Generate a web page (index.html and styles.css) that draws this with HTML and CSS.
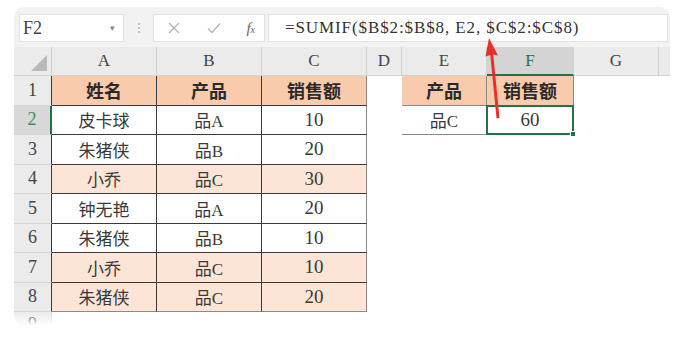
FILE: index.html
```html
<!DOCTYPE html>
<html lang="zh-CN">
<head>
<meta charset="utf-8">
<title>SUMIF</title>
<link rel="stylesheet" href="styles.css">
</head>
<body>
<div class="card">
  <div class="fbar">
    <div class="namebox"><span class="ref">F2</span><span class="caret">▾</span></div>
    <div class="dots"><i></i><i></i><i></i></div>
    <div class="btns">
      <svg class="ic" width="14" height="14" viewBox="0 0 14 14"><path d="M2 2L12 12M12 2L2 12" stroke="#b5b5b5" stroke-width="1.3" fill="none"/></svg>
      <svg class="ic" width="16" height="14" viewBox="0 0 16 14"><path d="M2 7.5L6 11.5L14 2.5" stroke="#b5b5b5" stroke-width="1.3" fill="none"/></svg>
      <span class="fx">f<small>x</small></span>
    </div>
    <div class="formula">=SUMIF($B$2:$B$8, E2, $C$2:$C$8)</div>
  </div>
  <div class="grid">
    <div class="ch corner"><span class="tri"></span></div>
    <div class="ch">A</div><div class="ch">B</div><div class="ch">C</div><div class="ch">D</div><div class="ch">E</div><div class="ch sel">F</div><div class="ch">G</div><div class="ch last"></div>

    <div class="rh">1</div>
    <div class="c hd">姓名</div><div class="c hd">产品</div><div class="c hd rb">销售额</div><div class="c e"></div>
    <div class="c hd eb">产品</div><div class="c hd eb">销售额</div><div class="c e"></div><div class="c e"></div>

    <div class="rh sel">2</div>
    <div class="c">皮卡球</div><div class="c">品A</div><div class="c rb num">10</div><div class="c e"></div>
    <div class="c eb">品C</div><div class="c eb active num">60<span class="handle"></span></div><div class="c e"></div><div class="c e"></div>

    <div class="rh">3</div>
    <div class="c">朱猪侠</div><div class="c">品B</div><div class="c rb num">20</div><div class="c e"></div><div class="c e"></div><div class="c e"></div><div class="c e"></div><div class="c e"></div>

    <div class="rh">4</div>
    <div class="c lt">小乔</div><div class="c lt">品C</div><div class="c lt rb num">30</div><div class="c e"></div><div class="c e"></div><div class="c e"></div><div class="c e"></div><div class="c e"></div>

    <div class="rh">5</div>
    <div class="c">钟无艳</div><div class="c">品A</div><div class="c rb num">20</div><div class="c e"></div><div class="c e"></div><div class="c e"></div><div class="c e"></div><div class="c e"></div>

    <div class="rh">6</div>
    <div class="c">朱猪侠</div><div class="c">品B</div><div class="c rb num">10</div><div class="c e"></div><div class="c e"></div><div class="c e"></div><div class="c e"></div><div class="c e"></div>

    <div class="rh">7</div>
    <div class="c lt">小乔</div><div class="c lt">品C</div><div class="c lt rb num">10</div><div class="c e"></div><div class="c e"></div><div class="c e"></div><div class="c e"></div><div class="c e"></div>

    <div class="rh">8</div>
    <div class="c lt bb">朱猪侠</div><div class="c lt bb">品C</div><div class="c lt rb bb num">20</div><div class="c e"></div><div class="c e"></div><div class="c e"></div><div class="c e"></div><div class="c e"></div>

    <div class="rh r9">9</div>
  </div>
  <svg class="arrow" width="30" height="90" viewBox="0 0 30 90"><path d="M12 0L21 17.5L16.2 16.5L22.5 80L19.5 80.3L13.3 17L8.5 18.5Z" fill="#e8302a"/></svg>
  <div class="fade"></div>
</div>
</body>
</html>
```
FILE: styles.css
```css
* { box-sizing: border-box; }
body {
  margin: 0;
  background: #fff;
  font-family: "Liberation Serif", "Noto Sans CJK SC", serif;
  color: #333;
}
.card {
  position: relative;
  margin: 7px 0 0 14px;
  width: 656px;
  height: 318px;
  border-radius: 10px 10px 0 12px;
  overflow: hidden;
  background: #f2f2f2;
}
.fbar {
  height: 40px;
  display: flex;
  align-items: flex-start;
  padding: 7px 2px 0 5px;
}
.namebox {
  width: 105px;
  height: 28px;
  background: #fff;
  border: 1px solid #e2e2e2;
  display: flex;
  align-items: center;
  justify-content: space-between;
  padding: 0 8px 0 3px;
  font-size: 18px;
  color: #444;
}
.caret { font-size: 9px; color: #888; }
.dots {
  width: 29px;
  height: 28px;
  display: flex;
  flex-direction: column;
  align-items: center;
  justify-content: center;
  gap: 2px;
}
.dots i { display: block; width: 2px; height: 2px; background: #c8c8c8; }
.btns {
  width: 112px;
  height: 28px;
  background: #fff;
  border: 1px solid #e2e2e2;
  display: flex;
  align-items: center;
  justify-content: space-between;
  padding: 0 9px 0 13px;
}
.fx { font-style: italic; font-size: 15px; color: #666; }
.fx small { font-size: 10px; }
.formula {
  margin-left: 3px;
  flex: 1;
  height: 28px;
  background: #fff;
  border: 1px solid #e2e2e2;
  font-size: 17px;
  letter-spacing: 0.9px;
  color: #333;
  line-height: 26px;
  padding-left: 16px;
  white-space: nowrap;
}
.grid {
  display: grid;
  grid-template-columns: 38px 105px 105px 105px 35px 85px 87px 85px 11px;
  grid-template-rows: 29px repeat(8, 29.5px) 22px;
  background: #fff;
}
.ch {
  background: #ebebeb;
  border-right: 1px solid #d2d2d2;
  border-bottom: 1px solid #d2d2d2;
  display: flex;
  align-items: center;
  justify-content: center;
  font-size: 17px;
  color: #444;
}
.ch.last { border-right: none; }
.ch.sel { background: #d4d4d4; color: #217346; border-bottom: 2px solid #217346; }
.corner { position: relative; }
.tri {
  position: absolute;
  right: 4px;
  bottom: 4px;
  width: 0;
  height: 0;
  border-left: 16px solid transparent;
  border-bottom: 16px solid #b9b9b9;
}
.rh {
  background: #ebebeb;
  border-right: 1px solid #3a3a3a;
  border-bottom: 1px solid #d6d6d6;
  display: flex;
  align-items: center;
  justify-content: center;
  font-size: 18px;
  color: #444;
  grid-column: 1;
}
.rh.r9 { align-items: flex-start; padding-top: 2px; border-right-color: #d2d2d2; }
.rh.sel { background: #d8d8d8; color: #3f8a64; border-right: 2px solid #217346; }
.c {
  display: flex;
  align-items: center;
  justify-content: center;
  font-size: 17px;
  color: #3a3a3a;
  border-right: 1px solid #3a3a3a;
  border-bottom: 1px solid #3a3a3a;
  position: relative;
}
.c.num { font-size: 19px; }
.c.hd { background: #f8cbad; font-weight: 700; font-size: 18px; color: #2a2a2a; }
.c.lt { background: #fce4d6; }
.c.rb { border-right-color: #8a8a8a; }
.c.bb { border-bottom-color: #8a8a8a; }
.c.e { border: none; }
.c.eb { border-right: 1px solid #8a8a8a; border-bottom: 1px solid #8a8a8a; }
.c.active {
  border: 2px solid #217346;
  margin-left: -1px;
  margin-top: -1px;
}
.handle {
  position: absolute;
  right: -4px;
  bottom: -4px;
  width: 6px;
  height: 6px;
  background: #217346;
  border: 1px solid #fff;
}
.arrow {
  position: absolute;
  left: 463px;
  top: 31px;
}
.fade {
  position: absolute;
  left: 0;
  right: 0;
  bottom: 0;
  height: 12px;
  background: linear-gradient(rgba(255,255,255,0), #fff);
}
```
